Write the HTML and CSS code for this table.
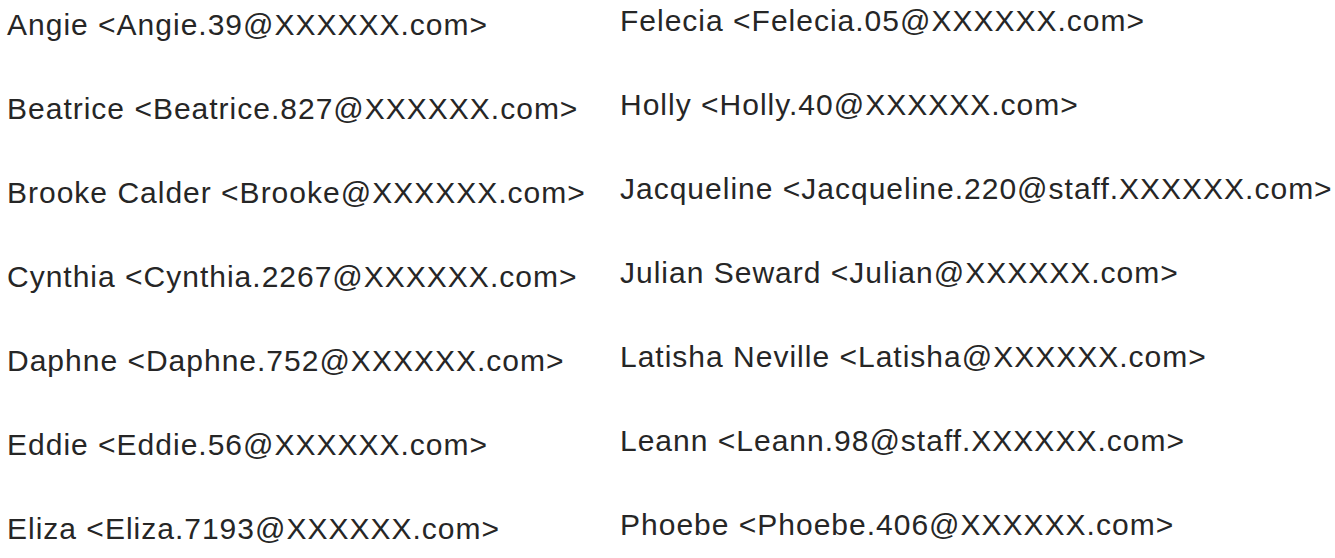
FILE: index.html
```html
<!DOCTYPE html>
<html>
<head>
    <meta charset="UTF-8">
    <title>Recipients</title>
    <link rel="stylesheet" href="styles.css">
</head>
<body>
    <div class="recipients">
        <ul class="col col-left">
            <li>Angie &lt;Angie.39@XXXXXX.com&gt;</li>
            <li>Beatrice &lt;Beatrice.827@XXXXXX.com&gt;</li>
            <li>Brooke Calder &lt;Brooke@XXXXXX.com&gt;</li>
            <li>Cynthia &lt;Cynthia.2267@XXXXXX.com&gt;</li>
            <li>Daphne &lt;Daphne.752@XXXXXX.com&gt;</li>
            <li>Eddie &lt;Eddie.56@XXXXXX.com&gt;</li>
            <li>Eliza &lt;Eliza.7193@XXXXXX.com&gt;</li>
        </ul>
        <ul class="col col-right">
            <li>Felecia &lt;Felecia.05@XXXXXX.com&gt;</li>
            <li>Holly &lt;Holly.40@XXXXXX.com&gt;</li>
            <li>Jacqueline &lt;Jacqueline.220@staff.XXXXXX.com&gt;</li>
            <li>Julian Seward &lt;Julian@XXXXXX.com&gt;</li>
            <li>Latisha Neville &lt;Latisha@XXXXXX.com&gt;</li>
            <li>Leann &lt;Leann.98@staff.XXXXXX.com&gt;</li>
            <li>Phoebe &lt;Phoebe.406@XXXXXX.com&gt;</li>
        </ul>
    </div>
</body>
</html>
```
FILE: styles.css
```css
body {
    margin: 0;
    background: #ffffff;
    font-family: "Liberation Sans", Arial, sans-serif;
    color: #262626;
}
.recipients {
    display: flex;
    padding-left: 7px;
}
.col {
    list-style: none;
    margin: 0;
    padding: 0;
}
.col li {
    font-size: 30px;
    letter-spacing: 1px;
    line-height: 84px;
    white-space: nowrap;
}
.col-left {
    width: 613px;
    margin-top: -17px;
}
.col-right {
    margin-top: -21px;
}
```
